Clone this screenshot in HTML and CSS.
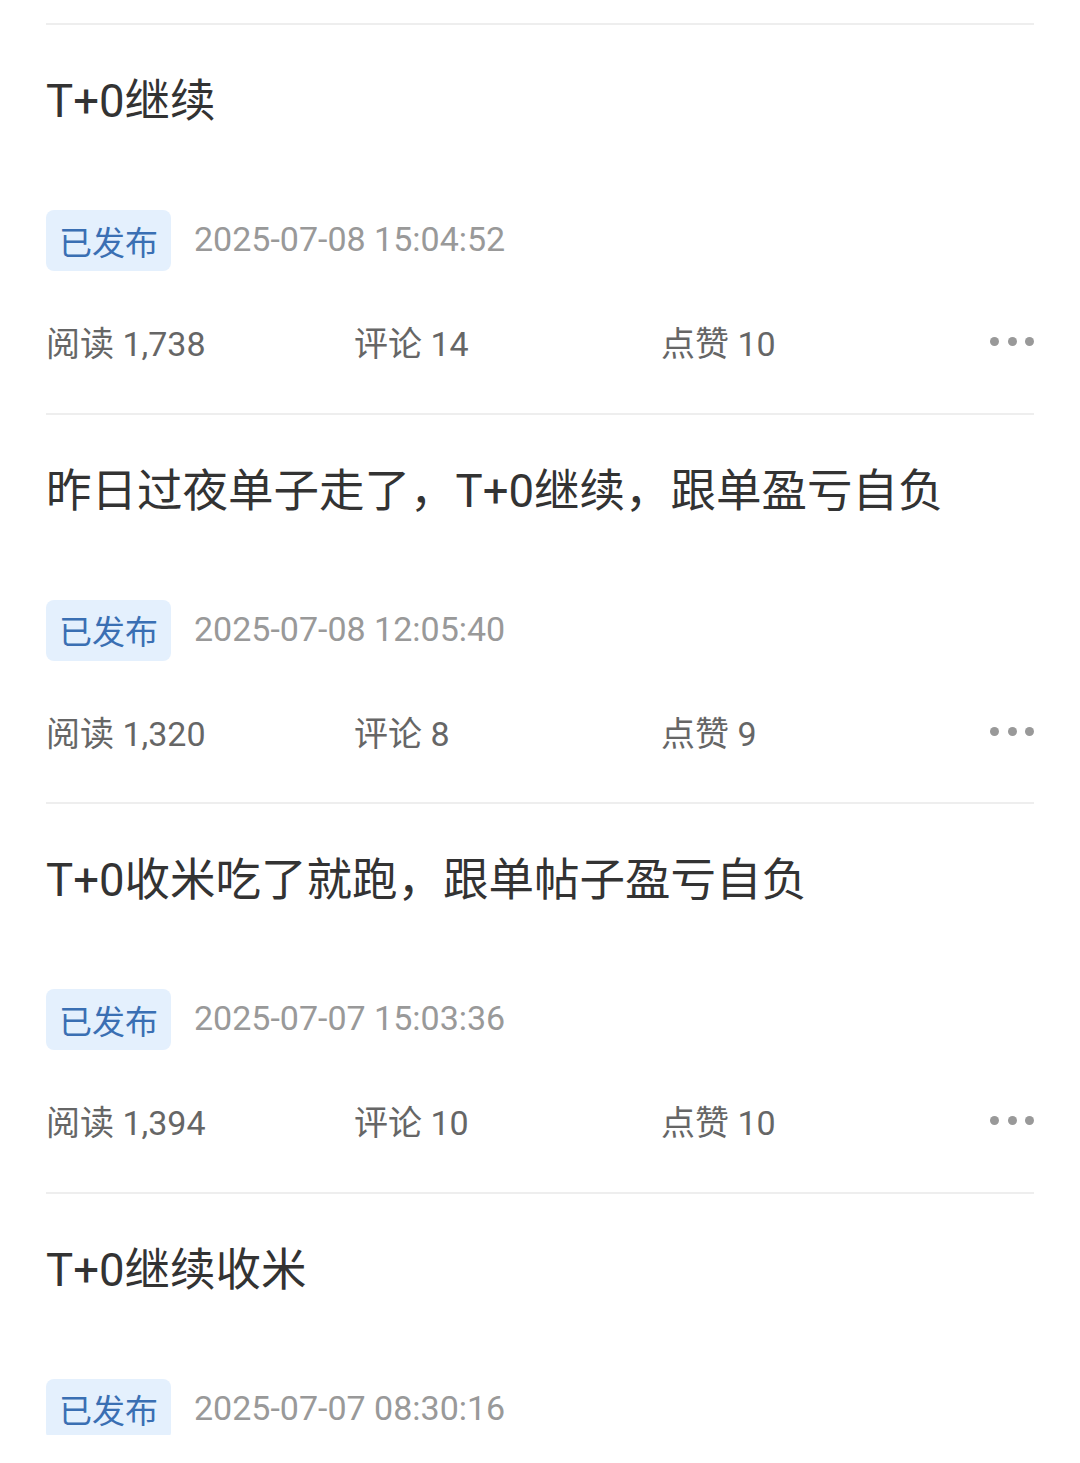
FILE: index.html
```html
<!DOCTYPE html>
<html lang="zh-CN">
<head>
<meta charset="utf-8">
<link rel="stylesheet" href="styles.css">
</head>
<body>
<div class="list">
  <div class="item">
    <div class="title">T+0继续</div>
    <div class="meta"><span class="badge">已发布</span><span class="date">2025-07-08 15:04:52</span></div>
    <div class="stats">
      <span class="stat">阅读 1,738</span>
      <span class="stat">评论 14</span>
      <span class="stat">点赞 10</span>
      <span class="more"><i></i><i></i><i></i></span>
    </div>
  </div>
  <div class="item">
    <div class="title">昨日过夜单子走了，T+0继续，跟单盈亏自负</div>
    <div class="meta"><span class="badge">已发布</span><span class="date">2025-07-08 12:05:40</span></div>
    <div class="stats">
      <span class="stat">阅读 1,320</span>
      <span class="stat">评论 8</span>
      <span class="stat">点赞 9</span>
      <span class="more"><i></i><i></i><i></i></span>
    </div>
  </div>
  <div class="item">
    <div class="title">T+0收米吃了就跑，跟单帖子盈亏自负</div>
    <div class="meta"><span class="badge">已发布</span><span class="date">2025-07-07 15:03:36</span></div>
    <div class="stats">
      <span class="stat">阅读 1,394</span>
      <span class="stat">评论 10</span>
      <span class="stat">点赞 10</span>
      <span class="more"><i></i><i></i><i></i></span>
    </div>
  </div>
  <div class="item">
    <div class="title">T+0继续收米</div>
    <div class="meta"><span class="badge">已发布</span><span class="date">2025-07-07 08:30:16</span></div>
  </div>
</div>
</body>
</html>
```

FILE: styles.css
```css
html, body {
  margin: 0;
  padding: 0;
  background: #ffffff;
}
body {
  width: 1080px;
  height: 1463px;
  overflow: hidden;
  font-family: Roboto, "Noto Sans CJK SC", sans-serif;
}
.list {
  height: 1435px;
  overflow: hidden;
  padding: 23px 46px 0 46px;
  box-sizing: border-box;
}
.item {
  border-top: 2px solid #eeeeee;
  height: 389.5px;
  box-sizing: border-box;
  display: flex;
  flex-direction: column;
  flex-shrink: 0;
}
.title {
  margin-top: 47px;
  height: 60px;
  line-height: 60px;
  font-size: 45.5px;
  color: #333333;
  white-space: nowrap;
}
.meta {
  margin-top: 78px;
  display: flex;
  align-items: center;
  height: 61px;
  flex-shrink: 0;
}
.badge {
  display: inline-flex;
  align-items: center;
  justify-content: center;
  height: 61px;
  width: 125px;
  box-sizing: border-box;
  border-radius: 8px;
  background: #e4f0fd;
  color: #3a6fb3;
  font-size: 33px;
}
.date {
  margin-left: 23px;
  margin-bottom: 3px;
  font-size: 34px;
  color: #999999;
}
.stats {
  margin-top: 49px;
  display: grid;
  grid-template-columns: 308px 307px 1fr auto;
  align-items: center;
  height: 48px;
  line-height: 48px;
  font-size: 34px;
  color: #666666;
}
.more {
  display: flex;
  gap: 8.5px;
  align-items: center;
  margin-bottom: 5px;
}
.more i {
  display: block;
  width: 9px;
  height: 9px;
  border-radius: 50%;
  background: #999999;
}
```
